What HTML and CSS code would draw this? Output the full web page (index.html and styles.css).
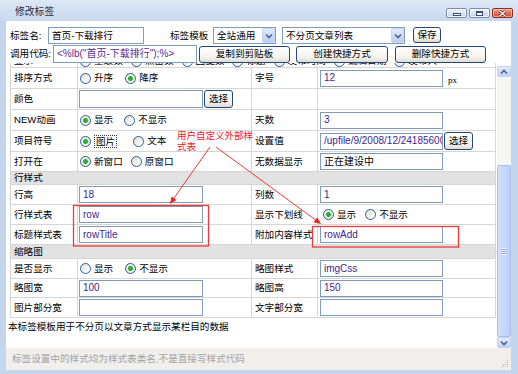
FILE: index.html
```html
<!DOCTYPE html>
<html lang="zh">
<head>
<meta charset="utf-8">
<title>修改标签</title>
<link rel="stylesheet" href="styles.css">
</head>
<body>
<div class="win">
  <div class="titlebar">
    <span class="title">修改标签</span>
    <div class="wbtns">
      <span class="wb"><span class="gmin"></span></span>
      <span class="wb"><span class="gmax"></span></span>
      <span class="wb close"><svg width="9" height="7" viewBox="0 0 9 7"><path d="M1.5 0.8 L7.5 6.2 M7.5 0.8 L1.5 6.2" stroke="#5a1a10" stroke-width="2.6"/><path d="M1.5 0.8 L7.5 6.2 M7.5 0.8 L1.5 6.2" stroke="#fff" stroke-width="1.4"/></svg></span>
    </div>
  </div>
  <div class="client">
    <div class="hdr r1">
      <span class="l1">标签名:</span>
      <span class="inp w96">首页-下载排行</span>
      <span class="l2">标签模板</span>
      <span class="sel w63"><span class="st">全站通用</span><span class="dd"><svg width="8" height="6" viewBox="0 0 8 6"><path d="M1 1.5 L4 4.5 L7 1.5" fill="none" stroke="#4d6185" stroke-width="1.6"/></svg></span></span>
      <span class="sel w123"><span class="st">不分页文章列表</span><span class="dd"><svg width="8" height="6" viewBox="0 0 8 6"><path d="M1 1.5 L4 4.5 L7 1.5" fill="none" stroke="#4d6185" stroke-width="1.6"/></svg></span></span>
      <span class="btn bsave">保存</span>
    </div>
    <div class="hdr r2">
      <span class="l3">调用代码:</span>
      <span class="inp w144 code">&lt;%lb("首页-下载排行");%&gt;</span>
      <span class="btn b1">复制到剪贴板</span>
      <span class="btn b2">创建快捷方式</span>
      <span class="btn b3">删除快捷方式</span>
    </div>
    <div class="scroll">
      <div class="pane">
        <div class="tbl">
          <div class="row h21 partial">
            <span class="c lab">显示</span>
            <span class="c span3 opts">
              <span class="opt"><span class="rd"></span>星级数</span>
              <span class="opt"><span class="rd"></span>点击数</span>
              <span class="opt"><span class="rd"></span>回复数</span>
              <span class="opt"><span class="rd"></span>标题</span>
              <span class="opt"><span class="rd"></span>发布时间</span>
              <span class="opt"><span class="rd"></span>编辑日期</span>
              <span class="opt"><span class="rd"></span>发布人</span>
            </span>
          </div>
          <div class="row h21">
            <span class="c lab">排序方式</span>
            <span class="c opts"><span class="opt g12"><span class="rd"></span>升序</span><span class="opt"><span class="rd on"></span>降序</span></span>
            <span class="c lab">字号</span>
            <span class="c v4"><span class="fi">12</span><span class="px">px</span></span>
          </div>
          <div class="row h21">
            <span class="c lab">颜色</span>
            <span class="c v2"><span class="fi tall"></span><span class="btn bsel">选择</span></span>
            <span class="c lab"></span>
            <span class="c v4"></span>
          </div>
          <div class="row h21">
            <span class="c lab">NEW动画</span>
            <span class="c opts"><span class="opt g11"><span class="rd on"></span>显示</span><span class="opt"><span class="rd"></span>不显示</span></span>
            <span class="c lab">天数</span>
            <span class="c v4"><span class="fi">3</span></span>
          </div>
          <div class="row h21">
            <span class="c lab">项目符号</span>
            <span class="c opts"><span class="opt g16"><span class="rd on"></span><span class="focus">图片</span></span><span class="opt"><span class="rd"></span>文本</span></span>
            <span class="c lab">设置值</span>
            <span class="c v4"><span class="fi">/upfile/9/2008/12/24185600</span><span class="btn bsel">选择</span></span>
          </div>
          <div class="row h20">
            <span class="c lab">打开在</span>
            <span class="c opts"><span class="opt g8"><span class="rd on"></span>新窗口</span><span class="opt"><span class="rd"></span>原窗口</span></span>
            <span class="c lab">无数据显示</span>
            <span class="c v4"><span class="fi cn">正在建设中</span></span>
          </div>
          <div class="row sec h13"><span class="c full">行样式</span></div>
          <div class="row h20">
            <span class="c lab">行高</span>
            <span class="c v2"><span class="fi">18</span></span>
            <span class="c lab">列数</span>
            <span class="c v4"><span class="fi">1</span></span>
          </div>
          <div class="row h20">
            <span class="c lab">行样式表</span>
            <span class="c v2"><span class="fi">row</span></span>
            <span class="c lab">显示下划线</span>
            <span class="c opts o4"><span class="opt g9"><span class="rd on"></span>显示</span><span class="opt"><span class="rd"></span>不显示</span></span>
          </div>
          <div class="row h20">
            <span class="c lab">标题样式表</span>
            <span class="c v2"><span class="fi">rowTitle</span></span>
            <span class="c lab">附加内容样式</span>
            <span class="c v4"><span class="fi">rowAdd</span></span>
          </div>
          <div class="row sec h14"><span class="c full">缩略图</span></div>
          <div class="row h20">
            <span class="c lab">是否显示</span>
            <span class="c opts"><span class="opt g12"><span class="rd"></span>显示</span><span class="opt"><span class="rd on"></span>不显示</span></span>
            <span class="c lab">略图样式</span>
            <span class="c v4"><span class="fi">imgCss</span></span>
          </div>
          <div class="row h19">
            <span class="c lab">略图宽</span>
            <span class="c v2"><span class="fi">100</span></span>
            <span class="c lab">略图高</span>
            <span class="c v4"><span class="fi">150</span></span>
          </div>
          <div class="row h20">
            <span class="c lab">图片部分宽</span>
            <span class="c v2"><span class="fi"></span></span>
            <span class="c lab">文字部分宽</span>
            <span class="c v4"><span class="fi"></span></span>
          </div>
        </div>
        <div class="note">本标签模板用于不分页以文章方式显示某栏目的数据</div>
      </div>
      <div class="sbar">
        <span class="sb-btn"><svg width="8" height="6" viewBox="0 0 8 6"><path d="M1 4.5 L4 1.5 L7 4.5" fill="none" stroke="#4d6185" stroke-width="1.6"/></svg></span>
        <span class="sb-track"></span>
        <span class="sb-thumb"><span class="grip"></span></span>
        <span class="sb-btn"><svg width="8" height="6" viewBox="0 0 8 6"><path d="M1 1.5 L4 4.5 L7 1.5" fill="none" stroke="#4d6185" stroke-width="1.6"/></svg></span>
      </div>
    </div>
    <div class="status">
      <span>标签设置中的样式均为样式表类名,不是直接写样式代码</span>
      <svg class="sgrip" width="8" height="8" viewBox="0 0 8 8"><g fill="#b8b8b0"><rect x="6" y="0" width="1" height="1"/><rect x="4" y="2" width="1" height="1"/><rect x="6" y="2" width="1" height="1"/><rect x="2" y="4" width="1" height="1"/><rect x="4" y="4" width="1" height="1"/><rect x="6" y="4" width="1" height="1"/><rect x="0" y="6" width="1" height="1"/><rect x="2" y="6" width="1" height="1"/><rect x="4" y="6" width="1" height="1"/><rect x="6" y="6" width="1" height="1"/></g></svg>
    </div>
  </div>
  <svg class="anno" width="518" height="374" viewBox="0 0 518 374">
    <rect x="73.5" y="205.5" width="135" height="40.5" fill="none" stroke="#ee3a3a" stroke-width="1.3"/>
    <rect x="312.5" y="226.5" width="146" height="20.5" fill="none" stroke="#ee3a3a" stroke-width="1.3"/>
    <line x1="210" y1="147" x2="173" y2="199.5" stroke="#f02020" stroke-width="0.9"/>
    <polygon points="170,204 176.5,200 171.6,196.6" fill="#f02020"/>
    <line x1="216" y1="147" x2="316" y2="220.3" stroke="#f02020" stroke-width="0.9"/>
    <polygon points="321,224 313.6,222.3 317.2,217.5" fill="#f02020"/>
  </svg>
  <div class="anno-text">用户自定义外部样式表</div>
</div>
</body>
</html>
```
FILE: styles.css
```css
* { box-sizing: border-box; }
html, body { margin: 0; padding: 0; }
body {
  width: 518px;
  height: 374px;
  overflow: hidden;
  background: #c4d5ee;
  font-family: "Liberation Sans", "Noto Sans CJK SC", sans-serif;
  font-size: 9.6px;
  line-height: 12px;
  color: #000;
}
.win {
  position: relative;
  width: 518px;
  height: 374px;
  display: flex;
  flex-direction: column;
}
.titlebar {
  flex: none;
  height: 21px;
  display: flex;
  background: linear-gradient(#dde8f6, #c8d8ef);
}
.title {
  padding: 6px 0 0 15px;
  font-size: 9.8px;
  color: #1e2c45;
}
.wbtns {
  margin-left: auto;
  display: flex;
  gap: 2px;
  padding: 8px 5px 0 0;
}
.wb {
  width: 21px;
  height: 10px;
  border: 1px solid #7a8daf;
  border-radius: 2px;
  background: linear-gradient(#f1f5fb, #c2d0e6);
  box-shadow: inset 0 0 0 1px rgba(255,255,255,.75);
  display: flex;
  align-items: center;
  justify-content: center;
}
.wb.close {
  border-color: #8e2d1c;
  background: linear-gradient(#f0a08a, #cf4a2f);
  box-shadow: inset 0 0 0 1px rgba(255,220,210,.6);
}
.gmin {
  width: 8px;
  height: 3px;
  margin-top: 3px;
  background: #fff;
  border: 1px solid #3c4f70;
}
.gmax {
  width: 7px;
  height: 5px;
  border: 1px solid #3c4f70;
  border-top-width: 2px;
  background: #fff;
}
.client {
  flex: none;
  height: 349px;
  margin: 0 7px 0 6px;
  background: #fff;
  display: flex;
  flex-direction: column;
}
.hdr {
  flex: none;
  display: flex;
  align-items: center;
  padding-left: 4px;
  white-space: nowrap;
}
.r1 { margin-top: 6px; height: 17px; }
.r2 { margin-top: 1px; height: 18px; position: relative; z-index: 1; }
.l1 { width: 38px; }
.l2 { width: 43px; margin-left: 26px; }
.l3 { width: 43px; }
.inp {
  height: 100%;
  border: 1px solid #7f9db9;
  background: #fff;
  display: flex;
  align-items: center;
  padding-left: 3px;
  overflow: hidden;
  white-space: nowrap;
}
.w96 { width: 96px; }
.w144 { width: 144px; }
.code { color: #5b2a93; font-size: 10px; }
.sel {
  height: 100%;
  border: 1px solid #7f9db9;
  background: #fff;
  display: flex;
  align-items: center;
  padding-left: 3px;
  white-space: nowrap;
}
.w63 { width: 63px; margin-left: 0; }
.w123 { width: 123px; margin-left: 6px; }
.st { flex: 1; overflow: hidden; }
.dd {
  width: 13px;
  height: 15px;
  border: 1px solid #c6d5f5;
  border-radius: 2px;
  background: linear-gradient(#e2eafb, #b9cdf6);
  display: flex;
  align-items: center;
  justify-content: center;
}
.btn {
  display: flex;
  align-items: center;
  justify-content: center;
  height: 17px;
  border: 1px solid #22497a;
  border-radius: 3px;
  background: linear-gradient(#ffffff, #f3f2ec 70%, #dedbd0);
  white-space: nowrap;
}
.bsave { width: 28px; margin-left: 8px; height: 16px; align-self: flex-start; }
.b1 { width: 91px; margin-left: 2px; }
.b2 { width: 92px; margin-left: 6px; }
.b3 { width: 91px; margin-left: 7px; }
.scroll {
  flex: none;
  height: 285px;
  display: flex;
}
.pane {
  width: 491px;
  height: 285px;
  overflow: hidden;
  padding-left: 4px;
}
.tbl {
  width: 486px;
  border-left: 1px solid #d3d3d3;
}
.row {
  display: grid;
  grid-template-columns: 67px 174px 66px 178px;
  border-bottom: 1px solid #d6d6d6;
  background: #fff;
}
.h21 { height: 21px; }
.h20 { height: 20px; }
.h19 { height: 19px; }
.h13 { height: 13px; }
.h14 { height: 14px; }
.partial { margin-top: -16px; }
.partial .c { align-items: flex-end; padding-bottom: 0; }
.c {
  border-right: 1px solid #d6d6d6;
  display: flex;
  align-items: center;
  white-space: nowrap;
  overflow: hidden;
}
.lab { padding-left: 3px; }
.span3 { grid-column: 2 / 5; }
.full { grid-column: 1 / 5; padding-left: 3px; }
.sec { background: #e2e2e2; }
.v2 { padding-left: 1px; }
.v4 { padding-left: 2px; }
.opts { padding-left: 2px; }
.o4 { padding-left: 5px; }
.partial .opts { gap: 8px; }
.opt { display: inline-flex; align-items: center; }
.g8 { margin-right: 8px; }
.g9 { margin-right: 9px; }
.g11 { margin-right: 11px; }
.g12 { margin-right: 12px; }
.g16 { margin-right: 16px; }
.rd {
  width: 11px;
  height: 11px;
  margin-right: 3px;
  border: 1px solid #2d5f95;
  border-radius: 50%;
  background: linear-gradient(135deg, #d9d9d2, #ffffff 80%);
}
.rd.on {
  background: radial-gradient(circle, #2eac2e 0 2px, #9fd89f 2.6px, #f4f4f0 3.2px, #dcdcd5);
}
.focus {
  border: 1px dotted #333;
  padding: 0 1px;
  line-height: 11px;
}
.fi {
  width: 124px;
  height: 17px;
  border: 1px solid #7f9db9;
  background: #fff;
  display: flex;
  align-items: center;
  padding-left: 3px;
  color: #3d1f8c;
  font-size: 10px;
  overflow: hidden;
  white-space: nowrap;
}
.v4 .fi { width: 123px; }
.fi.tall { height: 18px; }
.fi.cn { color: #000; }
.bsel { width: 29px; height: 18px; margin-left: 1px; }
.px {
  margin-left: 5px;
  margin-top: 4px;
  font-family: "Liberation Serif", serif;
  font-size: 9px;
}
.note {
  margin: 3px 0 0 -2px;
  line-height: 12px;
}
.sbar {
  width: 14px;
  margin-top: 3px;
  height: 282px;
  display: flex;
  flex-direction: column;
  background: #f5f5f1;
}
.sb-btn {
  flex: none;
  height: 11px;
  border: 1px solid #c3d3f7;
  border-radius: 2px;
  background: linear-gradient(#e4ecfc, #bcd0f8);
  display: flex;
  align-items: center;
  justify-content: center;
}
.sb-track { flex: none; height: 88px; }
.sb-thumb {
  flex: none;
  height: 172px;
  border: 1px solid #a9bff2;
  border-radius: 2px;
  background: linear-gradient(90deg, #d4e0fb, #bccef8);
  display: flex;
  align-items: center;
  justify-content: center;
}
.grip {
  width: 6px;
  height: 7px;
  background: repeating-linear-gradient(#eef3fe 0 1px, #8ea8e0 1px 2px);
}
.status {
  flex: none;
  height: 22px;
  background: #f0efec;
  color: #a3a3a3;
  display: flex;
  align-items: center;
  padding: 0 2px 0 6px;
}
.sgrip { margin-left: auto; align-self: flex-end; margin-bottom: 2px; }
.anno {
  position: absolute;
  left: 0;
  top: 0;
  pointer-events: none;
}
.anno-text {
  position: absolute;
  left: 177px;
  top: 130px;
  width: 80px;
  color: #f01818;
  font-size: 9.5px;
  line-height: 11px;
  font-family: "Noto Sans CJK SC", sans-serif;
}
```
